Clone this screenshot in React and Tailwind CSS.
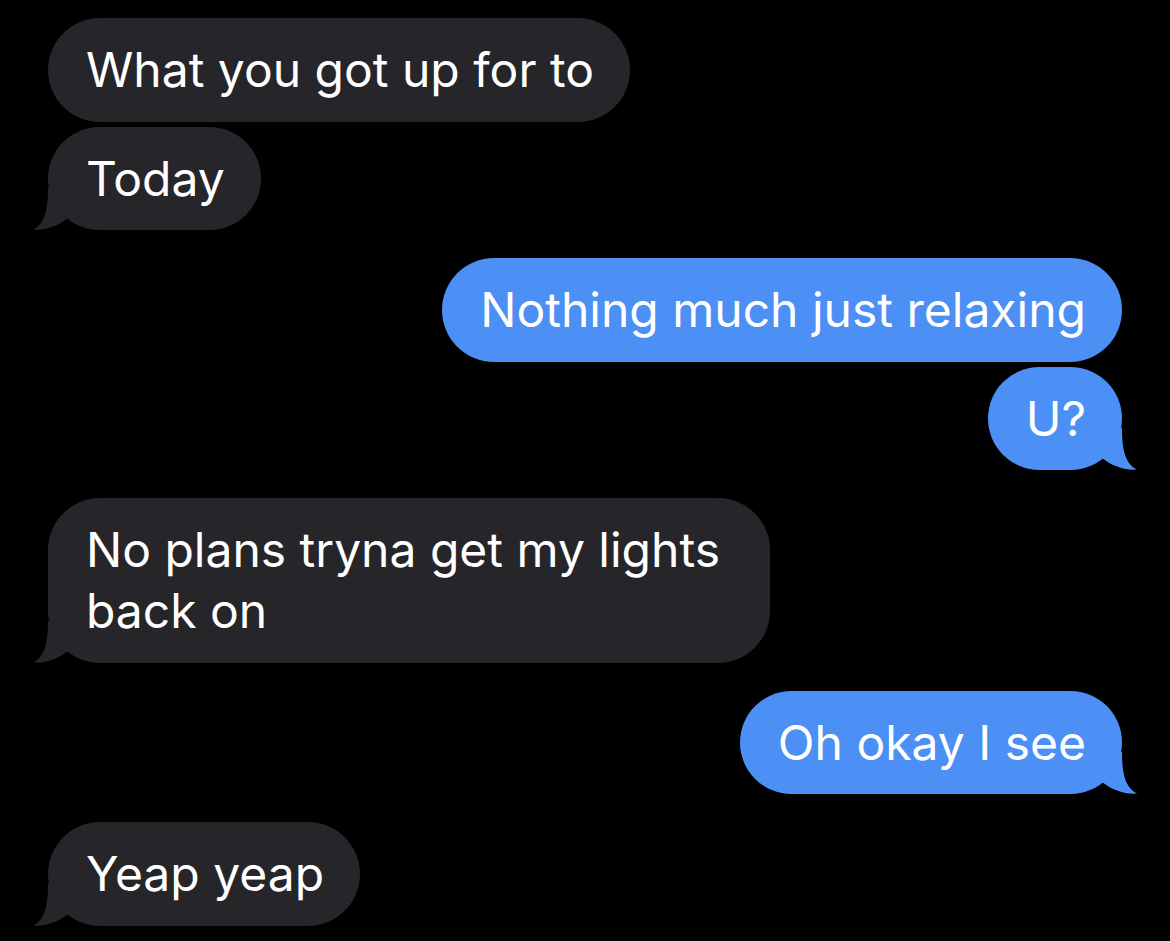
import React from 'react';

const messages = [
    { from: 'them', text: 'What you got up for to', tail: false },
    { from: 'them', text: 'Today', tail: true },
    { from: 'me', text: 'Nothing much just relaxing', tail: false },
    { from: 'me', text: 'U?', tail: true },
    { from: 'them', text: 'No plans tryna get my lights back on', tail: true },
    { from: 'me', text: 'Oh okay I see', tail: true },
    { from: 'them', text: 'Yeap yeap', tail: true },
];

const Tail = ({ mine }) => (
    <svg
        width="50"
        height="50"
        viewBox="0 0 50 50"
        className={`absolute bottom-0 ${mine ? '-right-[15px] -scale-x-100' : '-left-[15px]'}`}
        fill={mine ? '#4c8ff5' : '#262529'}
    >
        <path d="M15 8 C15 32 11 44 0 49.6 C12 50.6 25 46 35 38 L35 8 Z" />
    </svg>
);

const Bubble = ({ msg }) => {
    const mine = msg.from === 'me';
    return (
        <div className={`flex ${mine ? 'justify-end' : 'justify-start'}`}>
            <div
                className={`relative max-w-[722px] rounded-[52px] pl-[38px] pr-[36px] pt-[21px] pb-[21.5px] text-[48px] leading-[61px] text-white ${mine ? 'bg-[#4c8ff5]' : 'bg-[#262529]'}`}
            >
                {msg.tail && <Tail mine={mine} />}
                <span className="relative">{msg.text}</span>
            </div>
        </div>
    );
};

export default function App() {
    // group consecutive messages from the same sender
    const groups = [];
    messages.forEach((m) => {
        const last = groups[groups.length - 1];
        if (last && last[0].from === m.from) last.push(m);
        else groups.push([m]);
    });

    return (
        <div
            className="h-[941px] w-[1170px] overflow-hidden bg-black px-[48px] pt-[18px] flex flex-col gap-[28px]"
            style={{ fontFamily: 'Inter, "Noto Sans", sans-serif' }}
        >
            {groups.map((g, i) => (
                <div key={i} className="flex flex-col gap-[5px]">
                    {g.map((m, j) => (
                        <Bubble key={j} msg={m} />
                    ))}
                </div>
            ))}
        </div>
    );
}
